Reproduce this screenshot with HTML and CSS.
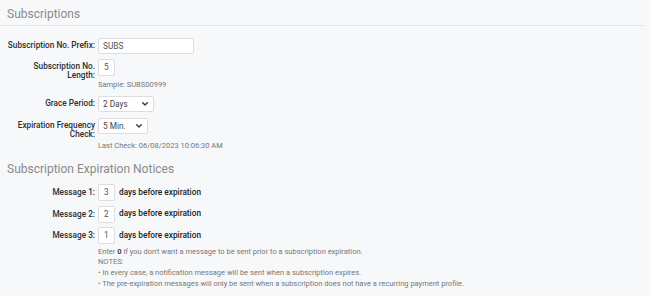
FILE: index.html
```html
<!DOCTYPE html>
<html>
<head>
<meta charset="utf-8">
<link rel="stylesheet" href="styles.css">
</head>
<body>
<div class="page">
  <h1 class="title">Subscriptions</h1>
  <div class="form">
    <div class="row first">
      <div class="label">Subscription No. Prefix:</div>
      <div class="input w-prefix">SUBS</div>
    </div>
    <div class="row gap5">
      <div class="label">Subscription No.<br>Length:</div>
      <div class="input w-num">5</div>
    </div>
    <div class="help">Sample: SUBS00999</div>
    <div class="row gap6">
      <div class="label">Grace Period:</div>
      <div class="select w-grace"><span>2 Days</span><svg class="chev" width="6" height="4" viewBox="0 0 6 4"><path d="M0.7 0.7 L3 3 L5.3 0.7" fill="none" stroke="#333" stroke-width="1.3" stroke-linecap="round" stroke-linejoin="round"/></svg></div>
    </div>
    <div class="row gap6">
      <div class="label">Expiration Frequency<br>Check:</div>
      <div class="select w-freq"><span>5 Min.</span><svg class="chev" width="6" height="4" viewBox="0 0 6 4"><path d="M0.7 0.7 L3 3 L5.3 0.7" fill="none" stroke="#333" stroke-width="1.3" stroke-linecap="round" stroke-linejoin="round"/></svg></div>
    </div>
    <div class="help help2">Last Check: 06/08/2023 10:06:30 AM</div>
  </div>
  <h2 class="title2">Subscription Expiration Notices</h2>
  <div class="form">
    <div class="row msg m1">
      <div class="label">Message 1:</div>
      <div class="input w-num">3</div>
      <div class="after">days before expiration</div>
    </div>
    <div class="row msg">
      <div class="label">Message 2:</div>
      <div class="input w-num">2</div>
      <div class="after">days before expiration</div>
    </div>
    <div class="row msg">
      <div class="label">Message 3:</div>
      <div class="input w-num">1</div>
      <div class="after">days before expiration</div>
    </div>
    <div class="notes">
      <div>Enter <b>0</b> if you don't want a message to be sent prior to a subscription expiration.</div>
      <div>NOTES:</div>
      <div>• In every case, a notification message will be sent when a subscription expires.</div>
      <div>• The pre-expiration messages will only be sent when a subscription does not have a recurring payment profile.</div>
    </div>
  </div>
</div>
</body>
</html>
```

FILE: styles.css
```css
html, body {
  margin: 0;
  padding: 0;
  background: #f7f8fa;
}
body {
  font-family: Roboto, "Liberation Sans", sans-serif;
  color: #333;
}
.page {
  width: 650px;
  height: 296px;
  overflow: hidden;
}
.title {
  margin: 0;
  width: 644px;
  box-sizing: border-box;
  padding: 6px 0 3px 7px;
  font-size: 12px;
  line-height: 16px;
  font-weight: 400;
  color: #8a8a8a;
  border-bottom: 1px solid #e2e3e7;
}
.title2 {
  margin: 10px 0 0 0;
  padding-left: 7px;
  font-size: 12px;
  line-height: 16px;
  font-weight: 400;
  color: #8a8a8a;
}
.form {
  display: flex;
  flex-direction: column;
}
.row {
  display: flex;
  align-items: flex-start;
}
.row.first { margin-top: 12px; }
.row.gap5 { margin-top: 5px; }
.row.gap6 { margin-top: 6px; }
.label {
  width: 95px;
  flex: none;
  text-align: right;
  padding-top: 3px;
  font-size: 8.25px;
  line-height: 9px;
  font-weight: 500;
  color: #2e2e2e;
  box-sizing: border-box;
}
.input, .select {
  margin-left: 3px;
  background: #fff;
  border: 1px solid #dcdde1;
  border-radius: 2px;
  box-sizing: border-box;
  font-size: 8.25px;
  color: #555;
  flex: none;
}
.input {
  height: 16px;
  line-height: 14px;
  padding: 0 4px;
}
.w-prefix { width: 96px; }
.w-num { width: 17px; height: 17px; line-height: 15px; padding: 0 4px 0 5px; }
.select {
  height: 16px;
  display: flex;
  align-items: center;
  justify-content: space-between;
  padding: 0 5px 0 4px;
  color: #444;
}
.w-grace { width: 56px; }
.w-freq { width: 50px; }
.chev { display: block; }
.help {
  margin-left: 98px;
  font-size: 7.5px;
  line-height: 10px;
  color: #777;
}
.help2 { margin-top: 2px; }
.row.msg {
  align-items: center;
  margin-top: 4.5px;
}
.row.msg.m1 { margin-top: 7px; }
.row.msg .label { padding-top: 0; }
.after {
  margin-left: 4px;
  font-size: 8.25px;
  font-weight: 500;
  color: #222;
  line-height: 9px;
  margin-top: -1px;
}
.notes {
  margin-left: 98px;
  margin-top: 2.5px;
  font-size: 7.5px;
  line-height: 10.8px;
  color: #777;
}
.notes b {
  font-weight: 700;
  color: #444;
}
```
